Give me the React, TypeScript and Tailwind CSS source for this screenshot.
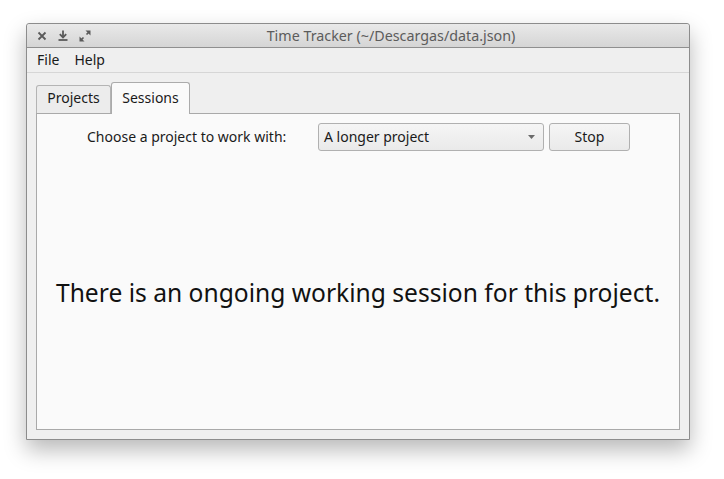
import { useState } from "react";

const font = { fontFamily: '"Noto Sans", "Open Sans", sans-serif' };

function TitleIcons() {
  return (
    <div className="flex items-center gap-[11px] pl-[10px] w-[66px] shrink-0">
      <svg width="10" height="10" viewBox="0 0 10 10">
        <path d="M1.5 1.5 L8.5 8.5 M8.5 1.5 L1.5 8.5" stroke="#5a5a5a" strokeWidth="1.8" />
      </svg>
      <svg width="10" height="11" viewBox="0 0 10 11">
        <path d="M5 0.5 V7" stroke="#5a5a5a" strokeWidth="1.8" />
        <path d="M1.8 4.2 L5 7.5 L8.2 4.2" fill="none" stroke="#5a5a5a" strokeWidth="1.8" />
        <path d="M0.5 10 H9.5" stroke="#5a5a5a" strokeWidth="1.8" />
      </svg>
      <svg width="12" height="12" viewBox="0 0 12 12">
        <path d="M6.5 0.5 H11.5 V5.5 Z" fill="#5a5a5a" />
        <path d="M0.5 6.5 V11.5 H5.5 Z" fill="#5a5a5a" />
        <path d="M10 2 L7.5 4.5 M2 10 L4.5 7.5" stroke="#5a5a5a" strokeWidth="1.6" />
      </svg>
    </div>
  );
}

export default function App() {
  const [tab, setTab] = useState("sessions");

  return (
    <div className="w-[724px] h-[479px] bg-white pt-[23px] pl-[26px]" style={font}>
      <div className="w-[664px] h-[417px] flex flex-col border border-[#8c8c8c] rounded-t-[3px] bg-[#efefef] shadow-[0_10px_22px_rgba(0,0,0,0.28)]">
        <div className="h-[24px] flex items-center border-b border-[#8f8f8f] bg-gradient-to-b from-[#e9e9e9] to-[#d5d5d5] rounded-t-[3px]">
          <TitleIcons />
          <div className="flex-1 flex items-center justify-center text-[14.3px] text-[#5c5c5c]">
            Time Tracker (~/Descargas/data.json)
          </div>
        </div>
        <div className="h-[25px] flex items-center gap-[15px] pl-[10px] pb-[2px] border-b border-[#d6d6d6] text-[14px] text-[#1a1a1a]">
          <span>File</span>
          <span>Help</span>
        </div>
        <div className="flex-1 flex flex-col pl-[9px] pr-[9px] pt-[9px] pb-[9px]">
          <div className="flex items-end h-[31px] text-[14px] text-[#1a1a1a]">
            <button
              onClick={() => setTab("projects")}
              className="h-[28px] w-[75px] border border-b-0 border-[#b4b4b4] rounded-t-[3px] bg-[#ececec] flex items-center justify-center pb-[4px]"
            >
              Projects
            </button>
            <button
              onClick={() => setTab("sessions")}
              className="relative -mb-px z-10 h-[32px] w-[79px] border border-b-0 border-[#ababab] rounded-t-[3px] bg-[#fafafa] flex items-center justify-center pb-[3px]"
            >
              Sessions
            </button>
          </div>
          <div className="flex-1 flex flex-col border border-[#a9a9a9] bg-[#fafafa]">
            <div className="flex items-center h-[37px] pt-[8px] text-[14px] text-[#1a1a1a]">
              <span className="ml-[50px] w-[231px]">Choose a project to work with:</span>
              <div className="h-[28px] w-[226px] flex items-center justify-between pl-[5px] pr-[8px] border border-[#b0b0b0] rounded-[3px] bg-gradient-to-b from-[#f5f5f5] to-[#eaeaea]">
                <span>A longer project</span>
                <svg width="7" height="4" viewBox="0 0 7 4">
                  <path d="M0 0 H7 L3.5 4 Z" fill="#6a6a6a" />
                </svg>
              </div>
              <button className="ml-[5px] h-[28px] w-[81px] border border-[#b0b0b0] rounded-[3px] bg-gradient-to-b from-[#f5f5f5] to-[#eaeaea] flex items-center justify-center">
                Stop
              </button>
            </div>
            <div className="flex-1 flex items-center justify-center pt-[6px]">
              <span className="text-[24.6px] text-[#111]">
                {tab === "sessions"
                  ? "There is an ongoing working session for this project."
                  : "There is an ongoing working session for this project."}
              </span>
            </div>
          </div>
        </div>
      </div>
    </div>
  );
}
